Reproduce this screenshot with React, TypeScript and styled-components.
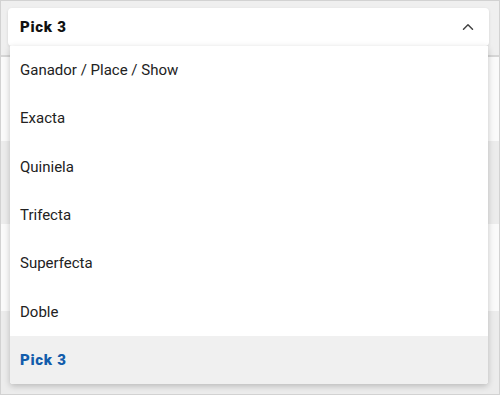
import styled, { createGlobalStyle } from 'styled-components';
import { ChevronUp } from 'lucide-react';

const GlobalStyle = createGlobalStyle`
  html, body {
    margin: 0;
    padding: 0;
    background: #fff;
  }
  * {
    box-sizing: border-box;
  }
`;

const Page = styled.div`
  width: 500px;
  height: 395px;
  overflow: hidden;
  display: flex;
  flex-direction: column;
  background: #efefef;
  border: 1px solid #d2d2d2;
  font-family: Roboto, 'Liberation Sans', sans-serif;
  color: #222;
`;

const TopBar = styled.div`
  padding: 7px 10px 9px 7px;
  border-bottom: 2px solid #d6d6d6;
  position: relative;
  z-index: 2;
`;

const Band = styled.div<{ $light?: boolean; $h: number }>`
  height: ${(p) => p.$h}px;
  flex-shrink: 0;
  background: ${(p) => (p.$light ? '#fafafa' : '#ececec')};
`;

const SelectWrap = styled.div`
  position: relative;
`;

const Trigger = styled.div`
  height: 38px;
  display: flex;
  align-items: center;
  justify-content: space-between;
  padding: 0 12px 0 12px;
  background: #fff;
  border-radius: 4px;
  box-shadow: 0 1px 3px rgba(0, 0, 0, 0.12);
  font-size: 15px;
  font-weight: 900;
  letter-spacing: 0.7px;
  color: #111;

  svg {
    color: #444;
  }
`;

const Menu = styled.ul`
  position: absolute;
  top: 38px;
  left: 2px;
  right: 1px;
  margin: 0;
  padding: 0;
  list-style: none;
  background: #fff;
  box-shadow: 0 2px 6px rgba(0, 0, 0, 0.22);
  border-radius: 0 0 3px 3px;
  overflow: hidden;
`;

const Option = styled.li<{ $selected?: boolean }>`
  height: 48.3px;
  display: flex;
  align-items: center;
  padding-left: 10px;
  font-size: 15px;
  background: ${(p) => (p.$selected ? '#f0f0f0' : '#fff')};
  color: ${(p) => (p.$selected ? '#125cab' : '#222')};
  font-weight: ${(p) => (p.$selected ? 900 : 400)};
  letter-spacing: ${(p) => (p.$selected ? '0.7px' : '0')};
`;

const options = ['Ganador / Place / Show', 'Exacta', 'Quiniela', 'Trifecta', 'Superfecta', 'Doble', 'Pick 3'];

const App = () => {
  const selected = 'Pick 3';

  return (
    <>
      <GlobalStyle />
      <Page>
        <TopBar>
          <SelectWrap>
            <Trigger>
              <span>{selected}</span>
              <ChevronUp size={18} strokeWidth={2} />
            </Trigger>
            <Menu>
              {options.map((o) => (
                <Option key={o} $selected={o === selected}>
                  {o}
                </Option>
              ))}
            </Menu>
          </SelectWrap>
        </TopBar>
        <Band $light $h={84} />
        <Band $h={83} />
        <Band $light $h={87} />
        <Band $h={85} />
      </Page>
    </>
  );
};

export default App;
